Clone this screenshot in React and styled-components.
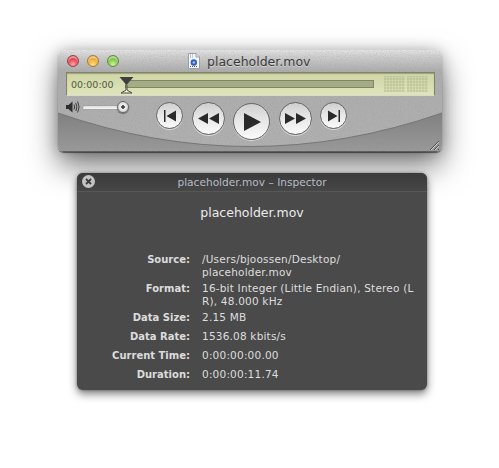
import styled, { createGlobalStyle } from "styled-components";

const GlobalStyle = createGlobalStyle`
  html, body {
    margin: 0;
    padding: 0;
    background: #fff;
  }
`;

const Page = styled.div`
  width: 499px;
  height: 468px;
  overflow: hidden;
  padding: 50px 0 0 58px;
  box-sizing: border-box;
  font-family: "DejaVu Sans", sans-serif;
`;

const Player = styled.div`
  position: relative;
  width: 384px;
  height: 102px;
  box-sizing: border-box;
  border-radius: 6px;
  background: linear-gradient(#e4e4e4 0, #cfcfcf 6px, #adadad 21px, #b0b0b0 100%);
  box-shadow: 0 14px 30px rgba(0, 0, 0, 0.52), 0 0 14px rgba(0, 0, 0, 0.22), 0 1px 1px rgba(0, 0, 0, 0.5);
`;

const BodyArt = styled.svg`
  position: absolute;
  left: 0;
  top: 0;
  border-radius: 6px;
`;

const TitleBar = styled.div`
  position: relative;
  height: 22px;
  display: flex;
  align-items: center;
`;

const Lights = styled.div`
  display: flex;
  gap: 8px;
  padding-left: 9px;
`;

const Light = styled.span`
  width: 12px;
  height: 12px;
  border-radius: 50%;
  box-sizing: border-box;
  border: 1px solid ${(p) => p.$edge};
  background: radial-gradient(circle at 50% 85%, ${(p) => p.$glow} 0, ${(p) => p.$color} 62%, ${(p) => p.$dark} 100%);
  box-shadow: inset 0 2px 1px rgba(255, 255, 255, 0.55);
`;

const TitleGroup = styled.div`
  display: flex;
  align-items: center;
  gap: 7px;
  margin-left: 69px;
`;

const TitleText = styled.span`
  font-size: 12.5px;
  color: #3b3b3b;
  text-shadow: 0 1px 0 rgba(255, 255, 255, 0.4);
`;

const Lcd = styled.div`
  position: relative;
  height: 24px;
  margin: 0 7px 0 8px;
  box-sizing: border-box;
  border: 1px solid #7f8568;
  border-bottom-color: #d8dcc8;
  background: linear-gradient(#cfd5a6, #dfe4bb);
  display: flex;
  align-items: center;
  padding-left: 4px;
  box-shadow: inset 0 1px 1px rgba(60, 70, 30, 0.35);
`;

const TimeCode = styled.span`
  font-size: 9.5px;
  color: #4f5a3f;
  width: 54px;
`;

const Track = styled.div`
  width: 249px;
  height: 8px;
  box-sizing: border-box;
  border: 1px solid #7f8668;
  background: #a5ac85;
`;

const Playhead = styled.svg`
  position: absolute;
  left: 51px;
  top: 3px;
`;

const Grille = styled.div`
  display: flex;
  gap: 2px;
  margin-left: 10px;
`;

const GrilleBlock = styled.div`
  width: 21px;
  height: 16px;
  background-image:
    repeating-linear-gradient(90deg, rgba(120, 130, 85, 0.12) 0 2px, transparent 2px 3px),
    repeating-linear-gradient(0deg, rgba(120, 130, 85, 0.12) 0 2px, transparent 2px 3px);
`;

const Controls = styled.div`
  position: relative;
  display: flex;
  align-items: flex-start;
  padding: 4px 0 0 8px;
`;

const Volume = styled.div`
  display: flex;
  align-items: center;
  width: 90px;
  height: 14px;
`;

const SliderTrack = styled.div`
  width: 36px;
  height: 3px;
  margin-left: 3px;
  border-radius: 2px;
  background: linear-gradient(#dcdcdc, #f7f7f7);
  box-shadow: 0 0 1px rgba(60, 60, 60, 0.6);
`;

const SliderKnob = styled.div`
  width: 12px;
  height: 12px;
  margin-left: -2px;
  border-radius: 50%;
  box-sizing: border-box;
  border: 1px solid #666;
  background: radial-gradient(circle, #444 0 1.5px, #f2f2f2 2px, #c4c4c4 100%);
  box-shadow: 0 1px 1px rgba(0, 0, 0, 0.4);
`;

const Transport = styled.div`
  display: flex;
  align-items: flex-start;
  gap: 8.5px;
`;

const RoundButton = styled.button`
  width: ${(p) => p.$size}px;
  height: ${(p) => p.$size}px;
  margin-top: ${(p) => p.$top}px;
  padding: 0;
  border-radius: 50%;
  box-sizing: border-box;
  border: 1.5px solid #666;
  background: linear-gradient(#cfcfcf, #e6e6e6 45%, #fafafa);
  box-shadow: 0 1px 0 rgba(255, 255, 255, 0.55);
  display: flex;
  align-items: center;
  justify-content: center;
`;

const Inspector = styled.div`
  position: relative;
  width: 350px;
  height: 217px;
  margin: 21px 0 0 19px;
  border-radius: 6px;
  background: #4a4a4a;
  box-shadow: 0 4px 9px rgba(0, 0, 0, 0.5), 0 0 3px rgba(0, 0, 0, 0.35);
  color: #e6e6e6;
`;

const InspectorBar = styled.div`
  position: relative;
  height: 18px;
  border-radius: 6px 6px 0 0;
  background: linear-gradient(#3a3a3a, #474747);
  border-bottom: 1px solid #575757;
  display: flex;
  align-items: center;
  justify-content: center;
  font-size: 10.6px;
  font-weight: 400;
  color: #b6bcc6;
`;

const CloseButton = styled.span`
  position: absolute;
  left: 5px;
  top: 2px;
  width: 13px;
  height: 13px;
  border-radius: 50%;
  background: #c4c4c4;
  display: flex;
  align-items: center;
  justify-content: center;
`;

const Heading = styled.h1`
  margin: 13px 0 32px;
  height: 16px;
  line-height: 16px;
  text-align: center;
  font-size: 12.5px;
  font-weight: 400;
  color: #ececec;
`;

const InfoRow = styled.div`
  display: flex;
  gap: 12px;
  margin-bottom: ${(p) => p.$gap}px;
  line-height: 13px;
`;

const InfoLabel = styled.span`
  width: 113px;
  text-align: right;
  font-size: 10px;
  font-weight: 700;
  color: #dcdcdc;
`;

const InfoValue = styled.span`
  width: 216px;
  font-size: 10.5px;
  color: #dedede;
  letter-spacing: 0.2px;
`;

const rows = [
  { label: "Source:", value: <>/Users/bjoossen/Desktop/<wbr />placeholder.mov</>, gap: 3 },
  { label: "Format:", value: "16-bit Integer (Little Endian), Stereo (L R), 48.000 kHz", gap: 3 },
  { label: "Data Size:", value: "2.15 MB", gap: 6 },
  { label: "Data Rate:", value: "1536.08 kbits/s", gap: 6 },
  { label: "Current Time:", value: "0:00:00:00.00", gap: 6 },
  { label: "Duration:", value: "0:00:00:11.74", gap: 0 },
];

const FileIcon = () => (
  <svg width="12" height="16" viewBox="0 0 12 16">
    <path d="M.5.5h7.5l3.5 3.5v11.500h-11z" fill="#f6f7fa" stroke="#9a9ea8" />
    <path d="M8 .5v3.500h3.500" fill="#dfe2ea" stroke="#9a9ea8" />
    <path d="M2 2h4M2 4h4" stroke="#8a93b0" strokeDasharray="1 1" />
    <circle cx="5.800" cy="9.500" r="3.200" fill="#2f5fc0" />
    <circle cx="5.800" cy="9.500" r="1.300" fill="#9cc0f0" />
    <path d="M2 13.500h8" stroke="#556" strokeDasharray="1 1" />
  </svg>
);

const Speaker = () => (
  <svg width="14" height="14" viewBox="0 0 14 14">
    <path d="M0 5h2.500L6.500 1.500v11L2.500 9H0z" fill="#2e2e2e" />
    <path d="M8 4.500q1.400 2.500 0 5M9.800 3q2.200 4 0 8M11.600 1.500q3 5.500 0 11" fill="none" stroke="#3c3c3c" strokeWidth="1" />
  </svg>
);

const SkipBack = () => (
  <svg width="12" height="12" viewBox="0 0 12 12">
    <path d="M0 0h1.500v12H0zM12 .5v11L2.500 6z" fill="#2a2a2a" />
  </svg>
);

const SkipForward = () => (
  <svg width="12" height="12" viewBox="0 0 12 12">
    <path d="M12 0h-1.500v12H12zM0 .5v11L9.500 6z" fill="#2a2a2a" />
  </svg>
);

const Rewind = () => (
  <svg width="21" height="11" viewBox="0 0 21 11">
    <path d="M0 5.500L10 0v11zM11 5.500L21 0v11z" fill="#2a2a2a" />
  </svg>
);

const FastForward = () => (
  <svg width="21" height="11" viewBox="0 0 21 11">
    <path d="M21 5.500L11 0v11zM10 5.500L0 0v11z" fill="#2a2a2a" />
  </svg>
);

const PlayIcon = () => (
  <svg width="19" height="18" viewBox="0 0 19 18">
    <path d="M2 0l17 9L2 18z" fill="#2a2a2a" />
  </svg>
);

const App = () => (
  <Page>
    <GlobalStyle />
    <Player>
      <BodyArt width="384" height="102" viewBox="0 0 384 102">
        <defs>
          <filter id="grain" x="0" y="0" width="100%" height="100%">
            <feTurbulence type="fractalNoise" baseFrequency="0.8" numOctaves="2" seed="4" />
            <feColorMatrix values="0 0 0 0 0.25  0 0 0 0 0.25  0 0 0 0 0.25  0.5 0 0 0 -0.2" />
          </filter>
          <linearGradient id="band" x1="0" y1="0" x2="0" y2="1">
            <stop offset="0" stopColor="#808080" />
            <stop offset="1" stopColor="#9a9a9a" />
          </linearGradient>
        </defs>
        <path d="M0 63Q192 130 384 63V96a6 6 0 0 1-6 6H6a6 6 0 0 1-6-6z" fill="url(#band)" />
        <path d="M0 63Q192 130 384 63" fill="none" stroke="#757575" />
        <path d="M0 101.500H384" stroke="#5c5c5c" />
        <rect width="384" height="102" filter="url(#grain)" />
        <path d="M381 91l-9 9M381 95l-5 5M381 99l-1 1" stroke="#4d4d4d" />
        <path d="M381 92l-8 8M381 96l-4 4" stroke="#d0d0d0" />
      </BodyArt>
      <TitleBar>
        <Lights>
          <Light $color="#e23a44" $glow="#ffa6ac" $dark="#a01f27" $edge="#93444a" />
          <Light $color="#eba326" $glow="#ffe08c" $dark="#b87416" $edge="#a37a3a" />
          <Light $color="#78c03e" $glow="#ccf59a" $dark="#4f9423" $edge="#5f8a46" />
        </Lights>
        <TitleGroup>
          <FileIcon />
          <TitleText>placeholder.mov</TitleText>
        </TitleGroup>
      </TitleBar>
      <Lcd>
        <TimeCode>00:00:00</TimeCode>
        <Track />
        <Playhead width="18" height="18" viewBox="0 0 18 18">
          <path d="M1.500 1h14l-7 8z" fill="#3f3f3f" />
          <path d="M8 9v5l-5 3h11l-5-3V9" fill="#eef0d8" stroke="#4a4a40" />
        </Playhead>
        <Grille>
          <GrilleBlock />
          <GrilleBlock />
        </Grille>
      </Lcd>
      <Controls>
        <Volume>
          <Speaker />
          <SliderTrack />
          <SliderKnob />
        </Volume>
        <Transport>
          <RoundButton $size={27} $top={2}><SkipBack /></RoundButton>
          <RoundButton $size={33} $top={2}><Rewind /></RoundButton>
          <RoundButton $size={37} $top={3}><PlayIcon /></RoundButton>
          <RoundButton $size={33} $top={2}><FastForward /></RoundButton>
          <RoundButton $size={27} $top={2}><SkipForward /></RoundButton>
        </Transport>
      </Controls>
    </Player>
    <Inspector>
      <InspectorBar>
        <CloseButton>
          <svg width="7" height="7" viewBox="0 0 7 7">
            <path d="M1 1l5 5M6 1l-5 5" stroke="#3c3c3c" strokeWidth="1.800" />
          </svg>
        </CloseButton>
        placeholder.mov – Inspector
      </InspectorBar>
      <Heading>placeholder.mov</Heading>
      {rows.map((row) => (
        <InfoRow key={row.label} $gap={row.gap}>
          <InfoLabel>{row.label}</InfoLabel>
          <InfoValue>{row.value}</InfoValue>
        </InfoRow>
      ))}
    </Inspector>
  </Page>
);

export default App;
